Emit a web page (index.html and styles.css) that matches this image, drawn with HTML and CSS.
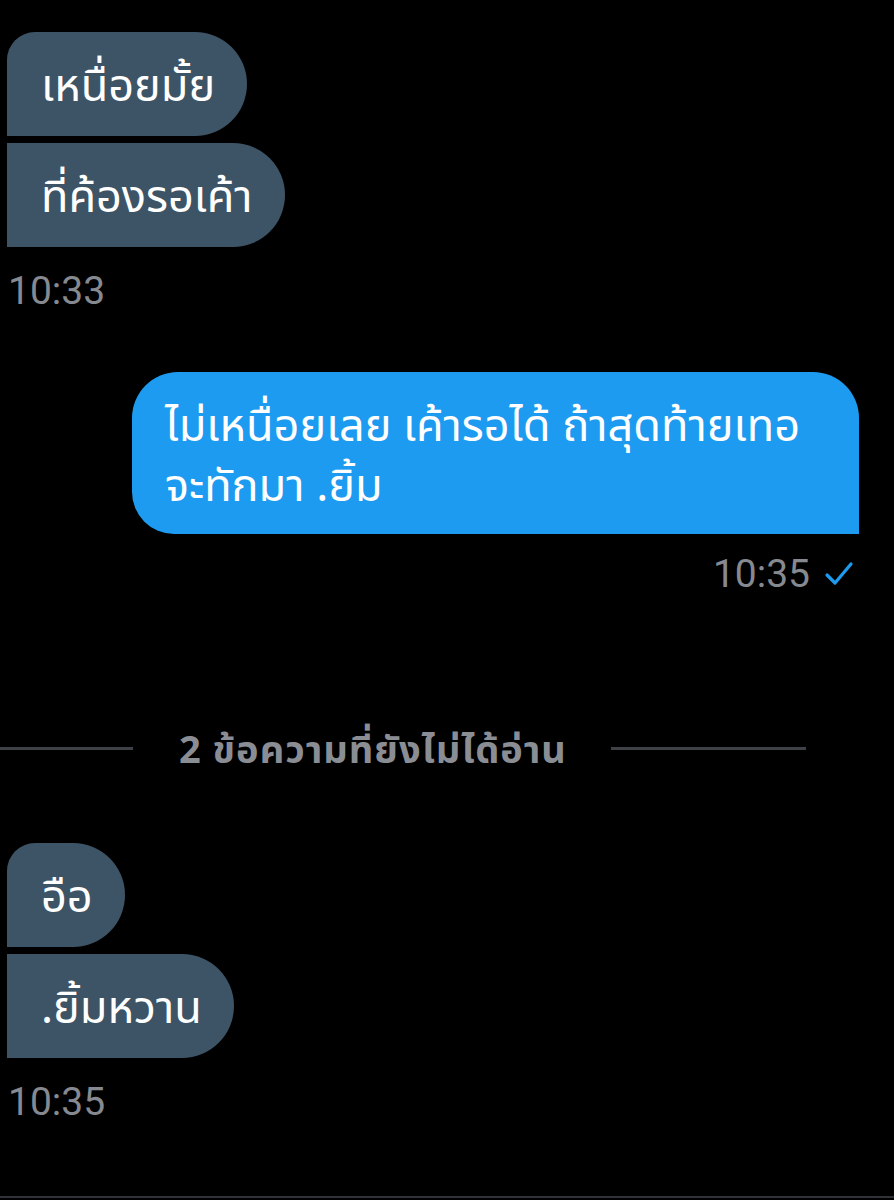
FILE: index.html
```html
<!DOCTYPE html>
<html lang="th">
<head>
  <meta charset="UTF-8">
  <meta name="viewport" content="width=device-width, initial-scale=1.0">
  <title>Chat</title>
  <link rel="stylesheet" href="styles.css">
</head>
<body>
  <div class="chat">

    <div class="group group-in">
      <div class="bubble in top">เหนื่อยมั้ย</div>
      <div class="bubble in">ที่ค้องรอเค้า</div>
      <div class="time">10:33</div>
    </div>

    <div class="group group-out">
      <div class="bubble out">ไม่เหนื่อยเลย เค้ารอได้ ถ้าสุดท้ายเทอ<br>จะทักมา .ยิ้ม</div>
      <div class="time time-out">
        10:35
        <svg class="check" width="30" height="26" viewBox="0 0 30 26">
          <path d="M3 14 L11 22 L27 3" fill="none" stroke="#1d9bf0" stroke-width="3.2" stroke-linecap="round" stroke-linejoin="round"/>
        </svg>
      </div>
    </div>

    <div class="divider">
      <span class="rule left"></span>
      <span class="divider-text">2 ข้อความที่ยังไม่ได้อ่าน</span>
      <span class="rule right"></span>
    </div>

    <div class="group group-in unread">
      <div class="bubble in top">อือ</div>
      <div class="bubble in">.ยิ้มหวาน</div>
      <div class="time">10:35</div>
    </div>

  </div>
  <div class="bottom-line"></div>
</body>
</html>
```

FILE: styles.css
```css
html, body {
  margin: 0;
  padding: 0;
  background: #000;
}
body {
  width: 894px;
  height: 1200px;
  overflow: hidden;
  font-family: "Noto Sans", "Noto Sans Thai", "DejaVu Sans", sans-serif;
  color: #fff;
  position: relative;
}
.chat {
  display: flex;
  flex-direction: column;
  padding: 32px 0 0 7px;
}
.group {
  display: flex;
  flex-direction: column;
  gap: 7px;
}
.group-in {
  align-items: flex-start;
}
.group-out {
  align-items: flex-end;
  margin-top: 59px;
  padding-right: 35px;
}
.bubble {
  font-size: 45px;
  line-height: 52px;
  padding: 26px 32px 26px 34px;
}
.bubble.in {
  background: #3d5466;
  border-radius: 0 52px 52px 0;
}
.bubble.in.top {
  border-top-left-radius: 28px;
}
.bubble.out {
  background: #1d9bf0;
  width: 727px;
  box-sizing: border-box;
  padding: 22px 30px 20px 33px;
  line-height: 60px;
  border-radius: 46px 46px 0 42px;
}
.time {
  font-family: Roboto, "Liberation Sans", sans-serif;
  font-size: 39px;
  color: #868a90;
  line-height: 44px;
  margin-top: 15px;
  padding-left: 1px;
}
.time-out {
  display: flex;
  align-items: center;
  gap: 14px;
  margin-top: 11px;
  padding-right: 5px;
}
.check {
  display: block;
}
.divider {
  display: flex;
  align-items: center;
  margin: 128px 0 0 -7px;
  width: 806px;
}
.rule {
  height: 3px;
  background: #3e4247;
}
.rule.left {
  width: 133px;
  margin-right: 46px;
}
.rule.right {
  flex: 1;
  margin-left: 44px;
}
.divider-text {
  font-size: 38px;
  font-weight: bold;
  letter-spacing: 1px;
  color: #8a8e94;
  line-height: 48px;
}
.unread {
  margin-top: 71px;
}
.bottom-line {
  position: absolute;
  left: 0;
  right: 0;
  top: 1196px;
  height: 2px;
  background: #2f3236;
}
```
